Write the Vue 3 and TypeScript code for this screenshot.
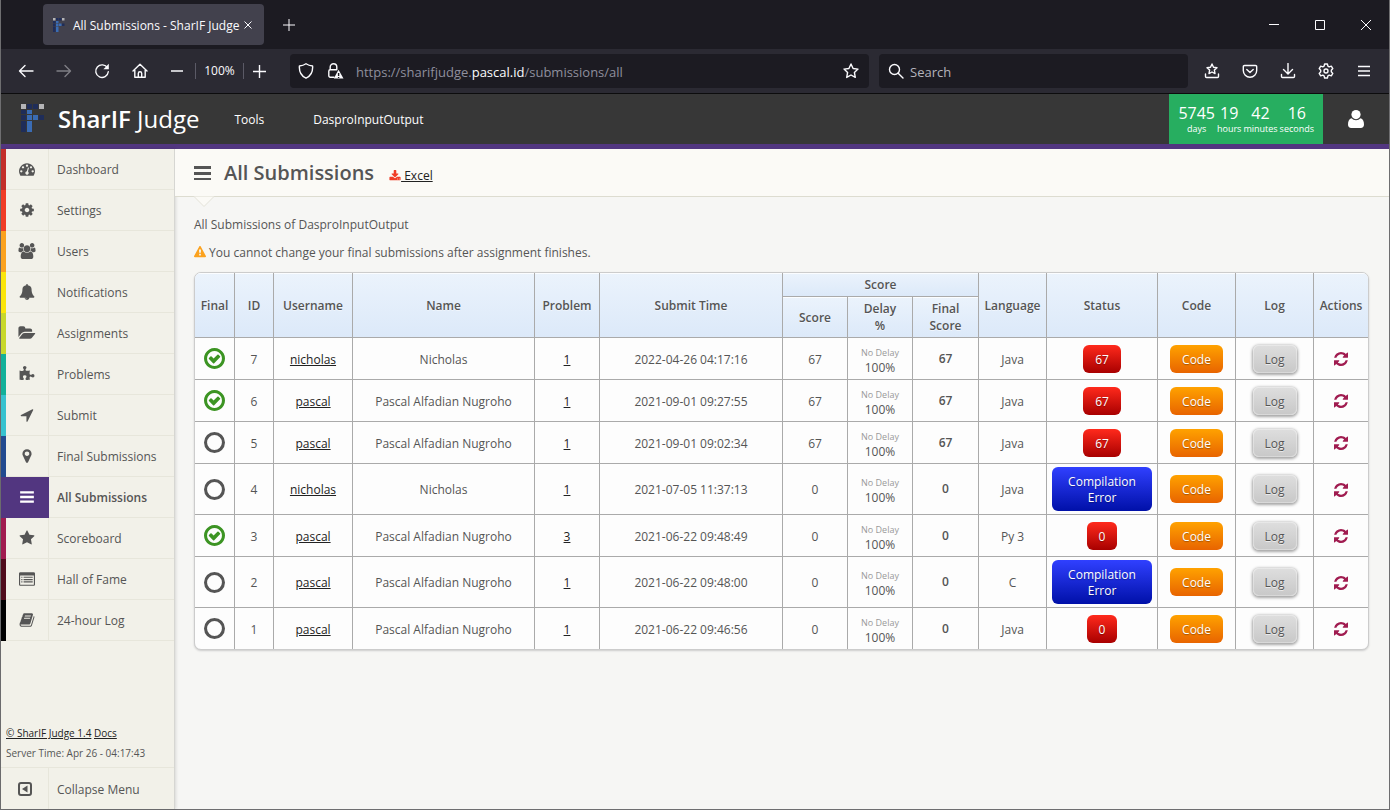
<script setup lang="ts">
interface MenuItem {
  label: string
  color: string
  icon: string
  box?: string
  wide?: boolean
  active?: boolean
}

interface Submission {
  id: number
  final: boolean
  username: string
  name: string
  problem: number
  time: string
  score: number
  language: string
  status: string
  tone: 'red' | 'blue'
}

const icons: Record<string, string> = {
  dashboard:
    'M384 1152q0-53-37.5-90.5t-90.5-37.5-90.5 37.5-37.5 90.5 37.5 90.5 90.5 37.5 90.5-37.5 37.5-90.5zm192-448q0-53-37.5-90.5t-90.5-37.5-90.5 37.5-37.5 90.5 37.5 90.5 90.5 37.5 90.5-37.5 37.5-90.5zm428 481l101-382q6-26-7.5-48.5t-38.5-29.5-48 6.5-30 39.5l-101 382q-60 5-107 43.5t-63 98.5q-20 77 20 146t117 89 146-20 89-117q16-60-6-117t-72-91zm660-33q0-53-37.5-90.5t-90.5-37.5-90.5 37.5-37.5 90.5 37.5 90.5 90.5 37.5 90.5-37.5 37.5-90.5zm-640-640q0-53-37.5-90.5t-90.5-37.5-90.5 37.5-37.5 90.5 37.5 90.5 90.5 37.5 90.5-37.5 37.5-90.5zm448 192q0-53-37.5-90.5t-90.5-37.5-90.5 37.5-37.5 90.5 37.5 90.5 90.5 37.5 90.5-37.5 37.5-90.5zm320 448q0 261-141 483-19 29-54 29h-1402q-35 0-54-29-141-221-141-483 0-182 71-348t191-286 286-191 348-71 348 71 286 191 191 286 71 348z',
  cog: 'M1152 896q0-106-75-181t-181-75-181 75-75 181 75 181 181 75 181-75 75-181zm512-109v222q0 12-8 23t-20 13l-185 28q-19 54-39 91 35 50 107 138 10 12 10 25t-9 23q-27 37-99 108t-94 71q-12 0-26-9l-138-108q-44 23-91 38-16 136-29 186-7 28-36 28h-222q-14 0-24.5-8.5t-11.5-21.5l-28-184q-49-16-90-37l-141 107q-10 9-25 9-14 0-25-11-126-114-165-168-7-10-7-23 0-12 8-23 15-21 51-66.5t54-70.5q-27-50-41-99l-183-27q-13-2-21-12.5t-8-23.5v-222q0-12 8-23t19-13l186-28q14-46 39-92-40-57-107-138-10-12-10-24 0-10 9-23 26-36 98.5-107.5t94.5-71.5q13 0 26 10l138 107q44-23 91-38 16-136 29-186 7-28 36-28h222q14 0 24.5 8.5t11.5 21.5l28 184q49 16 90 37l142-107q9-9 24-9 13 0 25 10 129 119 165 170 7 8 7 22 0 12-8 23-15 21-51 66.5t-54 70.5q26 50 41 98l183 28q13 2 21 12.5t8 23.5z',
  users:
    'M529 896q-162 5-265 128h-134q-82 0-138-40.5t-56-118.5q0-353 124-353 6 0 43.5 21t97.5 42.5 119 21.5q67 0 133-23-5 37-5 66 0 139 81 256zm1071 637q0 120-73 189.5t-194 69.5h-874q-121 0-194-69.5t-73-189.5q0-53 3.5-103.5t14-109 26.5-108.5 43-97.5 62-81 85.5-53.5 111.5-20q10 0 43 21.5t73 48 107 48 135 21.5 135-21.5 107-48 73-48 43-21.5q61 0 111.5 20t85.5 53.5 62 81 43 97.5 26.5 108.5 14 109 3.5 103.5zm-1024-1277q0 106-75 181t-181 75-181-75-75-181 75-181 181-75 181 75 75 181zm704 384q0 159-112.5 271.5t-271.5 112.5-271.5-112.5-112.5-271.5 112.5-271.5 271.5-112.5 271.5 112.5 112.5 271.5zm576 225q0 78-56 118.5t-138 40.5h-134q-103-123-265-128 81-117 81-256 0-29-5-66 66 23 133 23 59 0 119-21.5t97.5-42.5 43.5-21q124 0 124 353zm-128-609q0 106-75 181t-181 75-181-75-75-181 75-181 181-75 181 75 75 181z',
  bell: 'M912 1696q0-16-16-16-59 0-101.5-42.5t-42.5-101.5q0-16-16-16t-16 16q0 73 51.5 124.5t124.5 51.5q16 0 16-16zm816-288q0 52-38 90t-90 38h-448q0 106-75 181t-181 75-181-75-75-181h-448q-52 0-90-38t-38-90q50-42 91-88t85-119.5 74.5-158.5 50-206 19.5-260q0-152 117-282.5t307-158.5q-8-19-8-39 0-40 28-68t68-28 68 28 28 68q0 20-8 39 190 28 307 158.5t117 282.5q0 139 19.5 260t50 206 74.5 158.5 85 119.5 91 88z',
  folder:
    'M1879 952q0 31-31 66l-336 396q-43 51-120.5 86.5t-143.5 35.5h-1088q-34 0-60.5-13t-26.5-43q0-31 31-66l336-396q43-51 120.5-86.5t143.5-35.5h1088q34 0 60.5 13t26.5 43zm-343-344v160h-832q-94 0-197 47.5t-164 119.5l-337 396-5 6q0-4-.5-12.5t-.5-12.5v-960q0-92 66-158t158-66h320q92 0 158 66t66 158v32h544q92 0 158 66t66 158z',
  puzzle:
    'M1728 1098q0 81-44.5 135t-123.5 54q-41 0-77.5-17.5t-59-38-56.5-38-71-17.5q-110 0-110 124 0 39 16 115t15 115v5q-22 0-33 1-34 3-97.5 11.5t-115.5 13.5-98 5q-61 0-103-26.5t-42-83.5q0-37 17.5-71t38-56.5 38-59 17.5-77.5q0-79-54-123.5t-135-44.5q-84 0-143 45.5t-59 127.5q0 43 15 83t33.5 64.5 33.5 53 15 50.5q0 45-46 89-37 35-117 35-95 0-245-24-9-2-27.5-4t-27.5-4l-13-2q-1 0-3-1-2 0-2-1v-1024q2 1 17.5 3.5t34 5 21.5 3.5q150 24 245 24 80 0 117-35 46-44 46-89 0-22-15-50.5t-33.5-53-33.5-64.5-15-83q0-82 59-127.5t144-45.5q80 0 134 44.5t54 123.5q0 41-17.5 77.5t-38 59-38 56.5-17.5 71q0 57 42 83.5t103 26.5q64 0 180-15t163-17v2q-1 2-3.5 17.5t-5 34-3.5 21.5q-24 150-24 245 0 80 35 117 44 46 89 46 22 0 50.5-15t53-33.5 64.5-33.5 83-15q82 0 127.5 59t45.5 143z',
  arrow:
    'M1593 349l-640 1280q-17 35-57 35-5 0-15-2-22-5-35.5-22.5t-13.5-39.5v-576h-576q-22 0-39.5-13.5t-22.5-35.5 4-42 29-30l1280-640q13-7 29-7 27 0 45 19 15 14 18.5 34.5t-6.5 39.5z',
  marker:
    'M1152 640q0-106-75-181t-181-75-181 75-75 181 75 181 181 75 181-75 75-181zm256 0q0 109-33 179l-364 774q-16 33-47.5 52t-67.5 19-67.5-19-46.5-52l-365-774q-33-70-33-179 0-212 150-362t362-150 362 150 150 362z',
  bars: 'M128 256h1536v256H128zM128 768h1536v256H128zM128 1280h1536v256H128z',
  star: 'M1728 647q0 22-26 48l-363 354 86 500q1 7 1 20 0 21-10.5 35.5t-30.5 14.5q-19 0-40-12l-449-236-449 236q-22 12-40 12-21 0-31.5-14.5t-10.5-35.5q0-6 2-20l86-500-364-354q-25-27-25-48 0-37 56-46l502-73 225-455q19-41 49-41t49 41l225 455 502 73q56 9 56 46z',
  list: 'M160 128h1472q66 0 113 47t47 113v1216q0 66-47 113t-113 47H160q-66 0-113-47T0 1504V288q0-66 47-113t113-47zM128 512v992q0 32 32 32h1472q32 0 32-32V512zM256 640h128v128H256zM256 896h128v128H256zM256 1152h128v128H256zM512 640h1024v128H512zM512 896h1024v128H512zM512 1152h1024v128H512z',
  book: 'M1703 478q40 57 18 129l-275 906q-19 64-76.5 107.5t-122.5 43.5h-923q-77 0-148.5-53.5t-99.5-131.5q-24-67-2-127 0-4 3-27t4-37q1-8-3-21.5t-3-19.5q2-11 8-21t16.5-23.5 16.5-23.5q23-38 45-91.5t30-91.5q3-10 .5-30t-.5-28q3-11 17-28t17-23q21-36 42-92t25-90q1-9-2.5-32t.5-28q4-13 22-30.5t22-22.5q19-26 42.5-84.5t27.5-96.5q1-8-3-25.5t-2-26.5q2-8 9-18t18-23 17-21q8-12 16.5-30.5t15-35 16-36 19.5-32 26.5-23.5 36-11.5 47.5 5.5l-1 3q38-9 51-9h761q74 0 114 56t18 130l-274 906q-36 119-71.5 153.5t-128.5 34.5h-869q-27 0-38 15-11 16-1 43 24 70 144 70h923q29 0 56-15.5t35-41.5l300-987q7-22 5-57 38 15 59 43zm-1064 2q-4 13 2 22.5t20 9.5h608q13 0 25.5-9.5t16.5-22.5l21-64q4-13-2-22.5t-20-9.5h-608q-13 0-25.5 9.5t-16.5 22.5zm-83 256q-4 13 2 22.5t20 9.5h608q13 0 25.5-9.5t16.5-22.5l21-64q4-13-2-22.5t-20-9.5h-608q-13 0-25.5 9.5t-16.5 22.5z',
  refresh:
    'M1639 1056q0 5-1 7-64 268-268 434.5t-478 166.5q-146 0-282.5-55t-243.5-157l-129 129q-19 19-45 19t-45-19-19-45v-448q0-26 19-45t45-19h448q26 0 45 19t19 45-19 45l-137 137q71 66 161 102t187 36q134 0 250-65t186-179q11-17 53-117 8-23 30-23h192q13 0 22.5 9.5t9.5 22.5zm25-800v448q0 26-19 45t-45 19h-448q-26 0-45-19t-19-45 19-45l138-138q-148-137-349-137-134 0-250 65t-186 179q-11 17-53 117-8 23-30 23h-199q-13 0-22.5-9.5t-9.5-22.5v-7q65-268 270-434.5t480-166.5q146 0 284 55.5t245 156.5l130-129q19-19 45-19t45 19 19 45z',
  download:
    'M1344 1344q0-26-19-45t-45-19-45 19-19 45 19 45 45 19 45-19 19-45zm256 0q0-26-19-45t-45-19-45 19-19 45 19 45 45 19 45-19 19-45zm128-224v320q0 40-28 68t-68 28h-1472q-40 0-68-28t-28-68v-320q0-40 28-68t68-28h465l135 136q58 56 136 56t136-56l136-136h464q40 0 68 28t28 68zm-325-569q17 41-14 70l-448 448q-18 19-45 19t-45-19l-448-448q-31-29-14-70 17-39 59-39h256v-448q0-26 19-45t45-19h256q26 0 45 19t19 45v448h256q42 0 59 39z',
  warning:
    'M1024 1375v-190q0-14-9.5-23.5t-22.5-9.5h-192q-13 0-22.5 9.5t-9.5 23.5v190q0 14 9.5 23.5t22.5 9.5h192q13 0 22.5-9.5t9.5-23.5zm-2-374l18-459q0-12-10-19-13-11-24-11h-220q-11 0-24 11-10 7-10 21l17 457q0 10 10 16.5t24 6.5h185q14 0 23.5-6.5t10.5-16.5zm-14-934l768 1408q35 63-2 126-17 29-46.5 46t-63.5 17h-1536q-34 0-63.5-17t-46.5-46q-37-63-2-126l768-1408q17-31 47-49t65-18 65 18 47 49z',
  check:
    'M1299 813l-422 422q-19 19-45 19t-45-19l-294-294q-19-19-19-45t19-45l102-102q19-19 45-19t45 19l147 147 275-275q19-19 45-19t45 19l102 102q19 19 19 45t-19 45zm141 83q0-148-73-273t-198-198-273-73-273 73-198 198-73 273 73 273 198 198 273 73 273-73 198-198 73-273zm224 0q0 209-103 385.5t-279.5 279.5-385.5 103-385.5-103-279.5-279.5-103-385.5 103-385.5 279.5-279.5 385.5-103 385.5 103 279.5 279.5 103 385.5z',
}

const menu: MenuItem[] = [
  { label: 'Dashboard', color: '#c32e2a', icon: 'dashboard' },
  { label: 'Settings', color: '#f03c26', icon: 'cog' },
  { label: 'Users', color: '#fba21f', icon: 'users', box: '-64 0 1920 1792', wide: true },
  { label: 'Notifications', color: '#fbe60b', icon: 'bell' },
  { label: 'Assignments', color: '#c8d82c', icon: 'folder', box: '0 0 1920 1792', wide: true },
  { label: 'Problems', color: '#12b099', icon: 'puzzle' },
  { label: 'Submit', color: '#37c2cf', icon: 'arrow' },
  { label: 'Final Submissions', color: '#224a90', icon: 'marker' },
  { label: 'All Submissions', color: '#523680', icon: 'bars', active: true },
  { label: 'Scoreboard', color: '#a01c50', icon: 'star' },
  { label: 'Hall of Fame', color: '#500c1c', icon: 'list' },
  { label: '24-hour Log', color: '#000000', icon: 'book' },
]

const countdown = [
  { value: '5745', unit: 'days' },
  { value: '19', unit: 'hours' },
  { value: '42', unit: 'minutes' },
  { value: '16', unit: 'seconds' },
]

const pascal = { username: 'pascal', name: 'Pascal Alfadian Nugroho' }
const nicholas = { username: 'nicholas', name: 'Nicholas' }

const submissions: Submission[] = [
  { id: 7, final: true, ...nicholas, problem: 1, time: '2022-04-26 04:17:16', score: 67, language: 'Java', status: '67', tone: 'red' },
  { id: 6, final: true, ...pascal, problem: 1, time: '2021-09-01 09:27:55', score: 67, language: 'Java', status: '67', tone: 'red' },
  { id: 5, final: false, ...pascal, problem: 1, time: '2021-09-01 09:02:34', score: 67, language: 'Java', status: '67', tone: 'red' },
  { id: 4, final: false, ...nicholas, problem: 1, time: '2021-07-05 11:37:13', score: 0, language: 'Java', status: 'Compilation Error', tone: 'blue' },
  { id: 3, final: true, ...pascal, problem: 3, time: '2021-06-22 09:48:49', score: 0, language: 'Py 3', status: '0', tone: 'red' },
  { id: 2, final: false, ...pascal, problem: 1, time: '2021-06-22 09:48:00', score: 0, language: 'C', status: 'Compilation Error', tone: 'blue' },
  { id: 1, final: false, ...pascal, problem: 1, time: '2021-06-22 09:46:56', score: 0, language: 'Java', status: '0', tone: 'red' },
]

const columns = ['final', 'id', 'username', 'name', 'problem', 'time', 'score', 'delay', 'total', 'language', 'status', 'code', 'log', 'actions']

// Squares of the logo on a 24 x 28 grid: x, y, width, height, colour
const logo: [number, number, number, number, string][] = [
  [0, 0, 5, 5, '#b4b4b6'],
  [6, 0, 5, 5, '#1f2d59'],
  [12, 0, 5, 5, '#1f2d59'],
  [18, 0, 5, 5, '#b4b4b6'],
  [0, 6, 5, 4, '#1f2d59'],
  [6, 6, 5, 4, '#3a6cb4'],
  [0, 11, 5, 5, '#1f2d59'],
  [6, 11, 5, 5, '#3a6cb4'],
  [12, 11, 5, 5, '#3a6cb4'],
  [18, 11, 5, 5, '#1f2d59'],
  [0, 17, 5, 11, '#1f2d59'],
  [6, 17, 5, 11, '#3a6cb4'],
]
</script>

<template>
  <div class="window">
    <div class="tabs">
      <div class="tab">
        <svg class="favicon" viewBox="0 0 24 28" aria-hidden="true">
          <rect v-for="(s, i) in logo" :key="i" :x="s[0]" :y="s[1]" :width="s[2]" :height="s[3]" :fill="s[4]" />
        </svg>
        <span class="tab-title">All Submissions - SharIF Judge</span>
        <button class="tab-close" aria-label="Close tab">
          <svg width="8" height="8" viewBox="0 0 8 8"><path d="M0.5 0.5l7 7M7.5 0.5l-7 7" /></svg>
        </button>
      </div>
      <button class="new-tab" aria-label="New tab">
        <svg width="12" height="12" viewBox="0 0 12 12"><path d="M6 0v12M0 6h12" /></svg>
      </button>
      <div class="window-controls">
        <button aria-label="Minimize"><svg width="10" height="10" viewBox="0 0 10 10"><path d="M0 4.5h10" /></svg></button>
        <button aria-label="Maximize"><svg width="10" height="10" viewBox="0 0 10 10"><path d="M0.5 0.5h9v9h-9z" /></svg></button>
        <button aria-label="Close"><svg width="10" height="10" viewBox="0 0 10 10"><path d="M0 0l10 10M10 0L0 10" /></svg></button>
      </div>
    </div>

    <div class="toolbar">
      <div class="nav">
        <button aria-label="Back"><svg width="16" height="16" viewBox="0 0 16 16"><path d="M15 8H2M7 2.5L1.5 8L7 13.5" /></svg></button>
        <button class="dim" aria-label="Forward"><svg width="16" height="16" viewBox="0 0 16 16"><path d="M1 8h13M9 2.5L14.500 8L9 13.500" /></svg></button>
        <button aria-label="Reload">
          <svg width="16" height="16" viewBox="0 0 16 16"><path d="M13.500 5A6.300 6.300 0 1 0 14.300 8.800" /><path class="solid" d="M14.800 0.800v5.400h-5.400z" /></svg>
        </button>
        <button aria-label="Home">
          <svg width="16" height="16" viewBox="0 0 16 16"><path d="M1 8L8 1.200L15 8M2.800 7v7.300h10.400V7M6.300 14v-3.500a1.700 1.700 0 0 1 3.400 0V14" /></svg>
        </button>
      </div>
      <div class="zoom-controls">
        <button aria-label="Zoom out"><svg width="12" height="12" viewBox="0 0 12 12"><path d="M0 6h12" /></svg></button>
        <button class="level">100%</button>
        <button aria-label="Zoom in"><svg width="13" height="13" viewBox="0 0 13 13"><path d="M6.500 0v13M0 6.500h13" /></svg></button>
      </div>
      <div class="address">
        <svg width="16" height="16" viewBox="0 0 16 16"><path d="M8 0.800c2 1.400 4 2 6.600 2.200c0.400 5.600-1.200 9.700-6.600 12.200C2.600 12.700 1 8.600 1.400 3C4 2.800 6 2.200 8 0.800z" /></svg>
        <svg class="lock" width="17" height="16" viewBox="0 0 17 16">
          <path d="M7 14.200H3.200a1.400 1.400 0 0 1-1.400-1.400V8.200a1.400 1.400 0 0 1 1.400-1.400h6.500M3.200 6.800V4a3.300 3.300 0 0 1 6.600 0v2.800" />
          <path class="solid" d="M11.500 6.800L16.500 15.600H6.800z" />
          <path class="cut" d="M11.600 10v3M11.600 14v1" />
        </svg>
        <span class="url" role="textbox" aria-label="Address" contenteditable="true" spellcheck="false">https://sharifjudge.<b>pascal.id</b>/submissions/all</span>
        <button aria-label="Bookmark this page">
          <svg width="16" height="16" viewBox="0 0 16 16"><path d="M8 1l2.100 4.500l4.900 0.600l-3.600 3.400l0.900 4.900L8 12l-4.300 2.400l0.900-4.900L1 6.100l4.900-0.600z" /></svg>
        </button>
      </div>
      <label class="search">
        <svg width="16" height="16" viewBox="0 0 16 16"><circle cx="6.500" cy="6.500" r="5" /><path d="M10.200 10.200L15 15" /></svg>
        <input type="search" placeholder="Search" aria-label="Search the web" />
      </label>
      <div class="extras">
        <button aria-label="Bookmarks"><svg width="16" height="16" viewBox="0 0 16 16"><path d="M8 1l1.500 3.200l3.500 0.500l-2.600 2.400l0.600 3.500L8 9l-3 1.600l0.600-3.500L3 4.700l3.500-0.500zM1.500 11v2.500a1 1 0 0 0 1 1h11a1 1 0 0 0 1-1V11" /></svg></button>
        <button aria-label="Pocket"><svg width="16" height="16" viewBox="0 0 16 16"><path d="M2.500 2.500h11a1.200 1.200 0 0 1 1.200 1.200V7.500a6.700 6.700 0 0 1-13.400 0V3.700a1.200 1.200 0 0 1 1.200-1.200zM4.800 6.500L8 9.600l3.200-3.100" /></svg></button>
        <button aria-label="Downloads"><svg width="16" height="16" viewBox="0 0 16 16"><path d="M8 0.500v10M3.500 6.500L8 11l4.500-4.500M1.500 11.500v2a1 1 0 0 0 1 1h11a1 1 0 0 0 1-1v-2" /></svg></button>
        <button aria-label="Settings"><svg width="16" height="16" viewBox="0 0 16 16"><path d="M6.600 1h2.800l0.500 2.100l1.300 0.700l2.100-0.600l1.500 2.400L13.300 7.200v1.600l1.500 1.600l-1.500 2.400l-2.100-0.600l-1.300 0.700L9.400 15H6.600l-0.500-2.100l-1.300-0.700l-2.100 0.600l-1.500-2.400L2.700 8.800V7.200L1.200 5.600l1.500-2.400l2.100 0.600l1.300-0.700z" /><circle cx="8" cy="8" r="2" /></svg></button>
        <button aria-label="Menu"><svg width="12" height="12" viewBox="0 0 12 12"><path d="M0 1.500h12M0 6h12M0 10.500h12" /></svg></button>
      </div>
    </div>

    <header class="site-header">
      <a class="brand" href="#">
        <svg width="24" height="28" viewBox="0 0 24 28" aria-hidden="true">
          <rect v-for="(s, i) in logo" :key="i" :x="s[0]" :y="s[1]" :width="s[2]" :height="s[3]" :fill="s[4]" />
        </svg>
        <span><strong>SharIF</strong> Judge</span>
      </a>
      <nav class="links">
        <a href="#">Tools</a>
        <a href="#">DasproInputOutput</a>
      </nav>
      <div class="countdown">
        <div v-for="part in countdown" :key="part.unit" class="part">
          <span class="value">{{ part.value }}</span>
          <span class="unit">{{ part.unit }}</span>
        </div>
      </div>
      <button class="profile" aria-label="Profile">
        <svg width="16" height="18" viewBox="0 0 16 18">
          <path d="M3.500 8.300C1 8.900 0 11.300 0 14.600C0 16.800 1.300 18 3.200 18h9.600c1.900 0 3.200-1.200 3.200-3.400c0-3.300-1-5.700-3.500-6.300a6 6 0 0 1-9 0z" />
          <circle cx="8" cy="4.600" r="4.600" />
        </svg>
      </button>
    </header>

    <div class="body">
      <aside class="sidebar">
        <nav class="menu">
          <a v-for="item in menu" :key="item.label" href="#" class="item" :class="{ active: item.active }">
            <span class="stripe" :style="{ background: item.color }"></span>
            <span class="icon-cell">
              <svg class="icon" :class="{ wide: item.wide }" :viewBox="item.box ?? '0 0 1792 1792'"><path :d="icons[item.icon]" fill-rule="evenodd" /></svg>
            </span>
            <span class="label">{{ item.label }}</span>
          </a>
        </nav>
        <div class="about">
          <div><a href="#">© SharIF Judge 1.4</a> <a href="#">Docs</a></div>
          <div>Server Time: Apr 26 - 04:17:43</div>
        </div>
        <button class="collapse">
          <span class="icon-cell">
            <svg width="14" height="14" viewBox="0 0 14 14"><rect x="1" y="1" width="12" height="12" rx="2" fill="none" stroke="#555" stroke-width="2" /><path d="M9.500 3.500v7L4 7z" /></svg>
          </span>
          <span class="label">Collapse Menu</span>
        </button>
      </aside>

      <main class="main">
        <div class="page-title">
          <svg class="title-icon" width="17" height="14" viewBox="0 0 17 14"><path d="M0 0h17v3H0zM0 6h17v3H0zM0 12h17v2H0z" /></svg>
          <h1>All Submissions</h1>
          <a class="excel" href="#"><svg viewBox="0 0 1792 1792"><path :d="icons.download" /></svg>&nbsp;Excel</a>
          <svg class="caret" width="22" height="12" viewBox="0 0 22 12"><path d="M1 0.500L11 10.500L21 0.500" /></svg>
        </div>
        <div class="content">
          <p>All Submissions of DasproInputOutput</p>
          <p><svg class="warn" viewBox="0 0 1792 1792"><path :d="icons.warning" /></svg> You cannot change your final submissions after assignment finishes.</p>
          <table>
            <colgroup>
              <col v-for="c in columns" :key="c" :class="'col-' + c" />
            </colgroup>
            <thead>
              <tr class="first">
                <th rowspan="2">Final</th>
                <th rowspan="2">ID</th>
                <th rowspan="2">Username</th>
                <th rowspan="2">Name</th>
                <th rowspan="2">Problem</th>
                <th rowspan="2">Submit Time</th>
                <th colspan="3">Score</th>
                <th rowspan="2">Language</th>
                <th rowspan="2">Status</th>
                <th rowspan="2">Code</th>
                <th rowspan="2">Log</th>
                <th rowspan="2">Actions</th>
              </tr>
              <tr class="second">
                <th>Score</th>
                <th>Delay<br />%</th>
                <th>Final<br />Score</th>
              </tr>
            </thead>
            <tbody>
              <tr v-for="row in submissions" :key="row.id">
                <td>
                  <svg class="mark" :class="{ chosen: row.final }" viewBox="128 128 1536 1536">
                    <path v-if="row.final" :d="icons.check" />
                    <circle v-else cx="896" cy="896" r="656" />
                  </svg>
                </td>
                <td class="text">{{ row.id }}</td>
                <td class="text"><a href="#">{{ row.username }}</a></td>
                <td class="text">{{ row.name }}</td>
                <td class="text"><a href="#">{{ row.problem }}</a></td>
                <td class="text">{{ row.time }}</td>
                <td class="text">{{ row.score }}</td>
                <td class="text delay"><small>No Delay</small>100%</td>
                <td class="total">{{ row.score }}</td>
                <td class="text">{{ row.language }}</td>
                <td><button class="btn" :class="row.tone">{{ row.status }}</button></td>
                <td><button class="btn orange">Code</button></td>
                <td><button class="btn grey">Log</button></td>
                <td>
                  <button class="rejudge" aria-label="Rejudge"><svg viewBox="128 128 1536 1536"><path :d="icons.refresh" /></svg></button>
                </td>
              </tr>
            </tbody>
          </table>
        </div>
      </main>
    </div>
  </div>
</template>

<style>
body {
  margin: 0;
}
</style>

<style scoped>
.window,
.window * {
  box-sizing: border-box;
}

.window {
  display: flex;
  flex-direction: column;
  min-height: 100vh;
  border: 1px solid #6e6e70;
  border-top: 0;
  background: #f6f6f4;
  color: #555;
  font-family: 'Open Sans', 'Noto Sans', sans-serif;
  font-size: 12px;
  line-height: 16px;
}

button {
  padding: 0;
  border: 0;
  background: none;
  color: inherit;
  font: inherit;
  cursor: pointer;
}

svg {
  display: block;
  flex: none;
  fill: currentColor;
}

/* Browser chrome */
.tabs {
  display: flex;
  align-items: center;
  height: 49px;
  padding-left: 42px;
  background: #1c1b22;
  color: #fbfbfe;
}

.tabs svg,
.toolbar svg {
  fill: none;
  stroke: currentColor;
}

.toolbar svg {
  stroke-width: 1.4;
  stroke-linejoin: round;
  stroke-linecap: round;
}

.tabs .favicon {
  stroke: none;
  width: 12px;
  height: 14px;
}

.toolbar .solid {
  fill: currentColor;
  stroke: none;
}

.toolbar .cut {
  stroke: #1c1b22;
  stroke-linecap: butt;
}

.tab {
  display: flex;
  align-items: center;
  width: 221px;
  height: 41px;
  padding: 0 8px 0 10px;
  border-radius: 4px;
  background: #42414d;
}

.tab-title {
  flex: 1;
  min-width: 0;
  padding: 2px 0 0 8px;
  white-space: nowrap;
}

.tab-close,
.new-tab {
  display: grid;
  place-items: center;
  width: 16px;
  height: 24px;
}

.new-tab {
  width: 24px;
  margin-left: 13px;
}

.window-controls {
  display: flex;
  margin-left: auto;
}

.window-controls button {
  display: grid;
  place-items: center;
  width: 46px;
  height: 30px;
}

.toolbar {
  display: flex;
  align-items: center;
  height: 45px;
  padding: 0 6px;
  border-bottom: 1px solid #0c0c0d;
  background: #2b2a33;
  color: #fbfbfe;
}

.nav,
.extras {
  display: flex;
}

.nav button,
.extras button {
  display: grid;
  place-items: center;
  width: 38px;
  height: 34px;
}

.dim {
  opacity: 0.4;
}

.zoom-controls {
  display: flex;
  align-items: center;
  width: 125px;
}

.zoom-controls button {
  display: grid;
  place-items: center;
  width: 36px;
  height: 16px;
}

.zoom-controls button:last-child {
  width: 30px;
}

.zoom-controls .level {
  width: 49px;
  border: solid #5b5a66;
  border-width: 0 1px;
  font-size: 12px;
}

.address,
.search {
  display: flex;
  align-items: center;
  height: 34px;
  border-radius: 4px;
  background: #1c1b22;
}

.address {
  flex: 1;
  min-width: 0;
  margin: 0 10px 0 6px;
  padding: 0 10px 0 8px;
}

.lock {
  margin-left: 13px;
}

.url {
  flex: 1;
  margin-left: 12px;
  padding-top: 2px;
  color: #8f8f9d;
  font-size: 13px;
  white-space: nowrap;
  outline: 0;
}

.url b {
  color: #fbfbfe;
  font-weight: 400;
}

.search {
  flex: 0 1 309px;
  min-width: 0;
  margin-right: 5px;
  padding: 0 10px 0 9px;
}

.search input {
  flex: 1;
  min-width: 0;
  margin-left: 6px;
  padding: 2px 0 0;
  border: 0;
  outline: 0;
  background: none;
  color: #fbfbfe;
  font: inherit;
  font-size: 13px;
}

.search input::placeholder {
  color: #b4b4bc;
}

/* Site header */
.site-header {
  display: flex;
  align-items: center;
  height: 55px;
  border-bottom: 5px solid #523680;
  background: #373737;
  color: #fff;
}

.site-header a {
  color: inherit;
  text-decoration: none;
}

.brand {
  display: flex;
  align-items: center;
  gap: 13px;
  padding-left: 20px;
  font-size: 24px;
  line-height: 32px;
}

.brand svg {
  margin-bottom: 2px;
}

.brand strong {
  font-weight: 600;
}

.links {
  display: flex;
  gap: 49px;
  padding: 2px 0 0 35px;
}

.countdown {
  display: flex;
  gap: 2px;
  height: 50px;
  margin-left: auto;
  padding: 9px 9px 0;
  background: #27ae60;
  text-align: center;
}

.value {
  display: block;
  font-size: 16px;
  line-height: 20px;
}

.unit {
  display: block;
  font-size: 9px;
  line-height: 12px;
}

.profile {
  display: grid;
  place-items: center;
  width: 66px;
  height: 50px;
}

/* Sidebar */
.body {
  display: flex;
  flex: 1;
}

.sidebar {
  display: flex;
  flex-direction: column;
  width: 174px;
  border-right: 1px solid #d6d6d2;
  background: #f2f1e9;
  box-shadow: 1px 0 3px rgba(0, 0, 0, 0.12);
}

.item {
  display: flex;
  height: 41px;
  color: inherit;
  text-decoration: none;
}

.stripe {
  width: 5px;
}

.icon-cell {
  display: grid;
  place-items: center;
  width: 43px;
  border-right: 1px solid #e7e6db;
}

.item .icon-cell,
.item .label {
  border-bottom: 1px solid #e7e6db;
}

.icon {
  width: 16px;
  height: 16px;
}

.icon.wide {
  width: 18px;
}

.label {
  display: flex;
  flex: 1;
  align-items: center;
  padding: 2px 0 0 8px;
  text-align: left;
}

.active .icon-cell {
  border-color: #523680;
  background: #523680;
  color: #fff;
}

.active .label {
  font-weight: 600;
}

.about {
  margin-top: auto;
  padding: 0 5px 4px;
  font-size: 10px;
  line-height: 20px;
}

.about a {
  color: #222;
}

.collapse {
  display: flex;
  height: 42px;
  border-top: 1px solid #e7e6db;
}

.collapse .icon-cell,
.collapse .label {
  height: 41px;
}

.collapse .icon-cell {
  width: 48px;
}

/* Page */
.main {
  flex: 1;
  min-width: 0;
}

.page-title {
  position: relative;
  display: flex;
  align-items: center;
  height: 48px;
  padding-left: 19px;
  border-bottom: 1px solid #dddcd0;
  background: #fbfaf6;
}

h1 {
  margin: 0 15px 0 13px;
  font-size: 20px;
  font-weight: 600;
  line-height: 28px;
}

.excel {
  display: flex;
  align-items: center;
  padding-top: 6px;
  color: #222;
}

.excel svg {
  width: 12px;
  height: 12px;
  color: #f03c26;
}

.caret {
  position: absolute;
  top: 47px;
  left: 18px;
  fill: #fbfaf6;
  stroke: #e3e2d8;
}

.content {
  padding: 20px 20px 20px 19px;
}

p {
  margin: 0 0 12px;
}

p:last-of-type {
  margin-bottom: 11px;
}

.warn {
  display: inline-block;
  width: 12px;
  height: 12px;
  color: #fba21f;
  vertical-align: -1px;
}

table {
  width: 100%;
  border: 1px solid #ccc;
  border-radius: 7px;
  border-spacing: 0;
  background: #fdfdfd;
  box-shadow: 0 1px 2px #ccc;
  table-layout: fixed;
  text-align: center;
  overflow: hidden;
}

.col-final,
.col-id {
  width: 39px;
}

.col-username {
  width: 79px;
}

.col-name {
  width: 182px;
}

.col-problem,
.col-score,
.col-delay {
  width: 65px;
}

.col-time {
  width: 183px;
}

.col-total {
  width: 66px;
}

.col-language {
  width: 68px;
}

.col-status {
  width: 111px;
}

.col-code,
.col-log {
  width: 78px;
}

.col-actions {
  width: 55px;
}

th,
td {
  padding: 3px 5px;
  border: 0 solid #aaa;
  border-left-width: 1px;
}

th {
  padding: 3px;
  background: linear-gradient(#ebf3fc, #dce9f9);
  box-shadow: inset 0 1px 0 rgba(255, 255, 255, 0.8);
  font-weight: 600;
  text-shadow: 0 1px 0 rgba(255, 255, 255, 0.5);
}

.first th {
  height: 23px;
}

.second th {
  height: 41px;
  line-height: 17px;
}

.second th,
td {
  border-top-width: 1px;
}

.first th:first-child,
td:first-child {
  border-left-width: 0;
}

th[rowspan],
.text {
  padding-top: 5px;
}

td {
  height: 42px;
}

td a {
  color: #222;
}

.mark {
  width: 21px;
  height: 21px;
  margin: 0 auto;
}

.mark circle {
  fill: none;
  stroke: #555;
  stroke-width: 224;
}

.mark.chosen {
  color: #3c9423;
}

.delay,
.delay small {
  line-height: 15px;
}

.delay small {
  display: block;
  color: #999;
  font-size: 9px;
}

.total {
  font-weight: 600;
}

.btn {
  display: inline-block;
  padding: 7px 12px 5px;
  border-radius: 6px;
  color: #fff;
  line-height: 16px;
  text-shadow: 0 1px 1px rgba(0, 0, 0, 0.3);
  vertical-align: middle;
}

.red {
  background: linear-gradient(#ff2a1c, #a80000);
}

.blue {
  background: linear-gradient(#3040ff, #0010a8);
}

.orange {
  background: linear-gradient(#ffa200, #e86400);
}

.grey {
  background: linear-gradient(#dedede, #c8c8c8);
  box-shadow: inset 0 0 0 1px rgba(255, 255, 255, 0.3), 0 1px 3px 1px rgba(0, 0, 0, 0.35);
  color: #555;
  text-shadow: 0 1px 0 rgba(255, 255, 255, 0.6);
}

.rejudge {
  color: #a01c50;
  vertical-align: middle;
}

.rejudge svg {
  width: 14px;
  height: 14px;
}
</style>
